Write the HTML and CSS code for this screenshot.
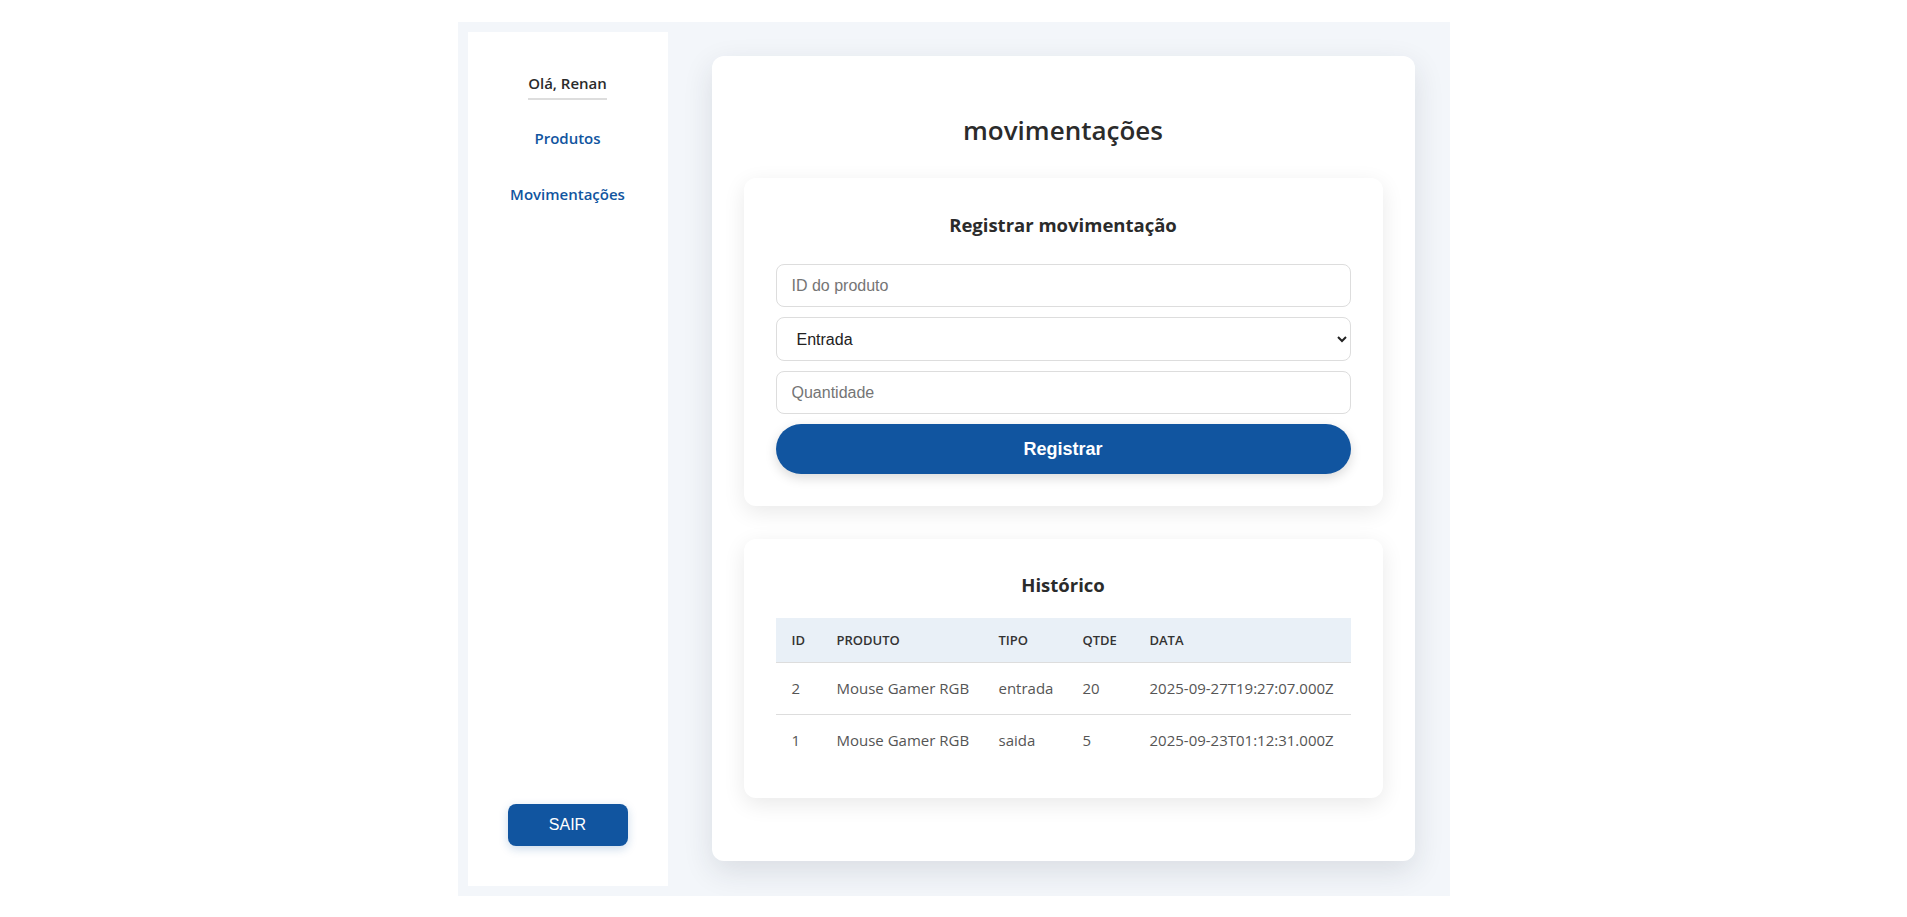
FILE: index.html
```html
<!DOCTYPE html>
<html lang="pt-BR">
<head>
<meta charset="utf-8">
<title>Movimentações</title>
<link rel="stylesheet" href="styles.css">
</head>
<body>
<div class="app">
  <aside class="sidebar">
    <div class="greeting">Olá, Renan</div>
    <nav class="nav">
      <a class="nav-link" href="#">Produtos</a>
      <a class="nav-link" href="#">Movimentações</a>
    </nav>
    <button class="logout" type="button">SAIR</button>
  </aside>
  <main class="main-card">
    <h2 class="page-title">movimentações</h2>
    <section class="card card-form">
      <h3 class="card-title">Registrar movimentação</h3>
      <form class="form">
        <input class="field" type="text" placeholder="ID do produto">
        <select class="field field-select">
          <option>Entrada</option>
          <option>Saída</option>
        </select>
        <input class="field" type="text" placeholder="Quantidade">
        <button class="submit" type="button">Registrar</button>
      </form>
    </section>
    <section class="card card-history">
      <h3 class="card-title title-history">Histórico</h3>
      <table class="table">
        <thead>
          <tr>
            <th class="c-id">ID</th>
            <th class="c-prod">PRODUTO</th>
            <th class="c-tipo">TIPO</th>
            <th class="c-qtde">QTDE</th>
            <th class="c-data">DATA</th>
          </tr>
        </thead>
        <tbody>
          <tr>
            <td>2</td>
            <td>Mouse Gamer RGB</td>
            <td>entrada</td>
            <td>20</td>
            <td>2025-09-27T19:27:07.000Z</td>
          </tr>
          <tr>
            <td>1</td>
            <td>Mouse Gamer RGB</td>
            <td>saida</td>
            <td>5</td>
            <td>2025-09-23T01:12:31.000Z</td>
          </tr>
        </tbody>
      </table>
    </section>
  </main>
</div>
</body>
</html>
```

FILE: styles.css
```css
* { box-sizing: border-box; }

html, body {
  margin: 0;
  padding: 0;
  background: #ffffff;
  font-family: "Open Sans", "Noto Sans", sans-serif;
  color: #333333;
}

.app {
  width: 992px;
  height: 874px;
  margin: 22px auto 0;
  padding: 10px;
  background: #f3f6fa;
  display: flex;
}

.sidebar {
  width: 200px;
  flex: 0 0 200px;
  background: #ffffff;
  display: flex;
  flex-direction: column;
  align-items: center;
  padding: 41px 0 40px;
}

.greeting {
  font-size: 15px;
  font-weight: 600;
  line-height: 20px;
  color: #2b2b2b;
  padding-bottom: 5px;
  border-bottom: 2px solid #dddddd;
}

.nav {
  display: flex;
  flex-direction: column;
  align-items: center;
  gap: 36px;
  margin-top: 28px;
}

.nav-link {
  font-size: 15px;
  font-weight: 600;
  line-height: 20px;
  color: #1155a0;
  text-decoration: none;
}

.logout {
  margin-top: auto;
  width: 120px;
  height: 42px;
  border: none;
  border-radius: 8px;
  background: #1155a0;
  color: #ffffff;
  font-family: "Liberation Sans", Arial, sans-serif;
  font-size: 16px;
  box-shadow: 0 3px 10px rgba(17, 85, 160, 0.22);
}

.main-card {
  flex: 1;
  margin: 24px 25px 25px 44px;
  background: #ffffff;
  border-radius: 12px;
  box-shadow: 0 10px 30px rgba(30, 40, 60, 0.12);
  padding: 40px 32px 32px;
}

.page-title {
  margin: 17px 0 30px;
  text-align: center;
  font-size: 26px;
  font-weight: 600;
  line-height: 35px;
  color: #2b2b2b;
}

.card {
  background: #ffffff;
  border-radius: 12px;
  box-shadow: 0 6px 22px rgba(0, 0, 0, 0.09);
  padding: 32px;
}

.card-history {
  margin-top: 33px;
}

.card-title {
  margin: 2px 0 27px;
  text-align: center;
  font-size: 18.5px;
  font-weight: 700;
  line-height: 25px;
  color: #2b2b2b;
}

.title-history {
  margin: 1px 0 21px;
}

.form {
  display: flex;
  flex-direction: column;
  gap: 10px;
}

.field {
  height: 43px;
  width: 100%;
  border: 1px solid #dddddd;
  border-radius: 8px;
  padding: 0 15px;
  font-family: "Liberation Sans", Arial, sans-serif;
  font-size: 16px;
  color: #222222;
  background: #ffffff;
}

.field::placeholder {
  color: #757575;
}

.field-select {
  height: 44px;
  padding: 0 12px 0 16px;
}

.submit {
  height: 50px;
  width: 100%;
  border: none;
  border-radius: 25px;
  background: #1155a0;
  color: #ffffff;
  font-family: "Liberation Sans", Arial, sans-serif;
  font-size: 18px;
  font-weight: 700;
  box-shadow: 0 4px 12px rgba(0, 0, 0, 0.15);
}

.table {
  width: 100%;
  border-collapse: collapse;
  table-layout: fixed;
}

.table th {
  background: #e9f0f7;
  text-align: left;
  font-size: 13px;
  font-weight: 600;
  color: #333333;
  height: 44px;
  padding: 0 0 0 16px;
  border-bottom: 1px solid #dddddd;
}

.table td {
  height: 52px;
  padding: 0 0 0 16px;
  font-size: 15px;
  color: #555555;
  white-space: nowrap;
}

.table tbody tr + tr td {
  border-top: 1px solid #dddddd;
}

.c-id { width: 45px; }
.c-prod { width: 162px; }
.c-tipo { width: 84px; }
.c-qtde { width: 67px; }
```
